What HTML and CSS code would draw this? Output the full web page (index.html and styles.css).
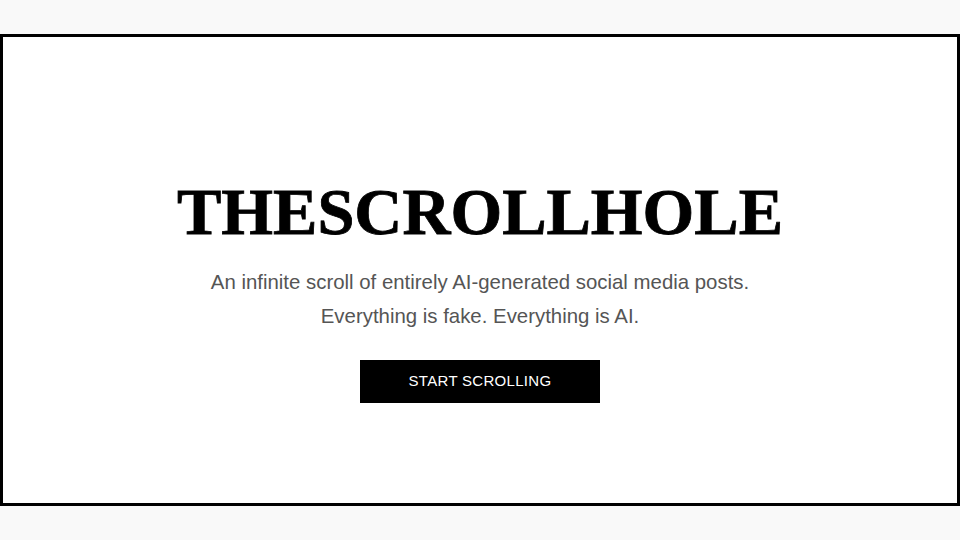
FILE: index.html
```html
<!DOCTYPE html>
<html lang="en">
<head>
    <meta charset="UTF-8">
    <meta name="viewport" content="width=device-width, initial-scale=1.0">
    <title>TheScrollHole</title>
    <link rel="stylesheet" href="styles.css">
</head>
<body>
    <div class="page">
        <section class="hero">
            <h1 class="logo">THESCROLLHOLE</h1>
            <p class="tagline">An infinite scroll of entirely AI-generated social media posts.<br>Everything is fake. Everything is AI.</p>
            <button class="start-btn">START SCROLLING</button>
        </section>
    </div>
</body>
</html>
```

FILE: styles.css
```css
/* Page background */
body {
    margin: 0;
    padding: 0;
    background-color: #f9f9f9;
    font-family: 'Liberation Sans', Arial, sans-serif;
}

.page {
    padding-top: 34px;
}

/* Landing box */
.hero {
    box-sizing: border-box;
    height: 472px;
    padding-top: 42px;
    background: #fff;
    border: 3px solid #000;
    display: flex;
    flex-direction: column;
    align-items: center;
    justify-content: center;
    text-align: center;
}

.logo {
    font-family: 'Liberation Serif', 'Times New Roman', serif;
    font-weight: bold;
    font-size: 66.5px;
    line-height: 1;
    margin: 0 0 20px;
    color: #000;
    -webkit-text-stroke: 0.8px #000;
}

.tagline {
    color: #555;
    font-size: 20.4px;
    line-height: 34px;
    margin: 0 0 27px;
}

.start-btn {
    width: 240px;
    height: 43px;
    padding-bottom: 3px;
    background: #000;
    color: #fff;
    border: none;
    font-family: 'Liberation Sans', Arial, sans-serif;
    font-size: 15px;
    letter-spacing: 0.3px;
    cursor: pointer;
}
```
